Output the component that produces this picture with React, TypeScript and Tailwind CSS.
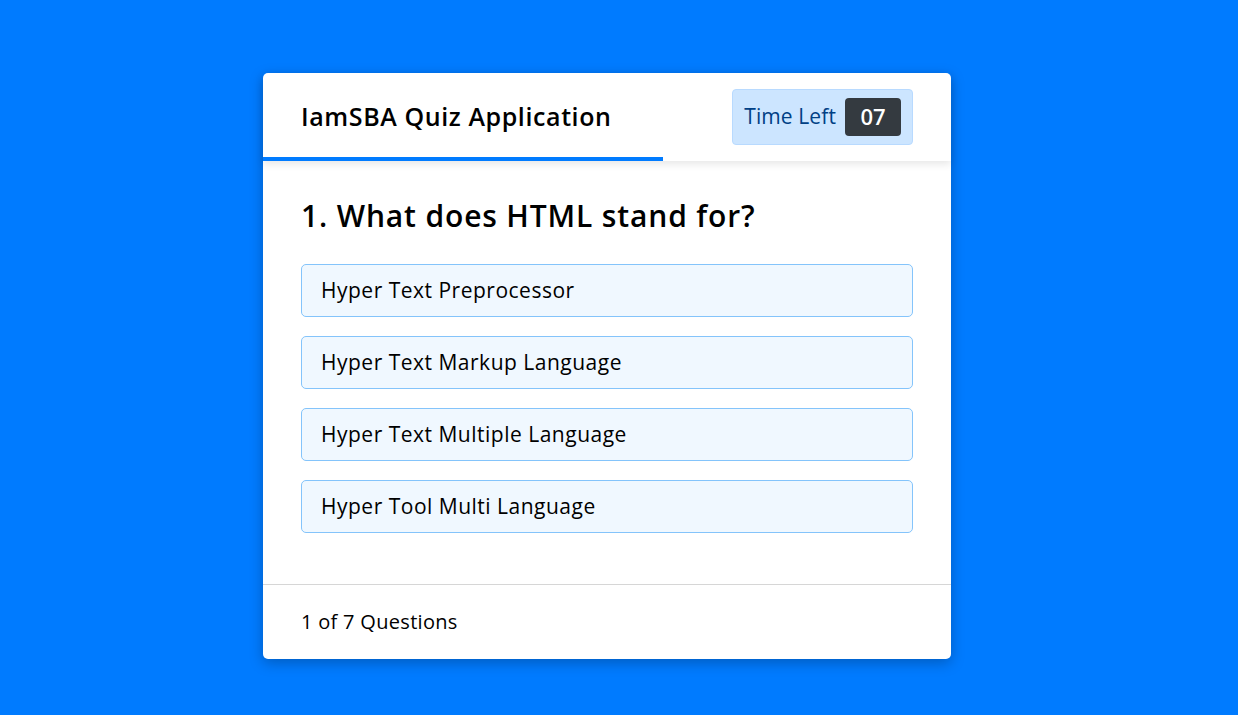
import React from "react";

const options = [
  "Hyper Text Preprocessor",
  "Hyper Text Markup Language",
  "Hyper Text Multiple Language",
  "Hyper Tool Multi Language",
];

const App: React.FC = () => {
  return (
    <div
      className="min-h-screen bg-[#007bff] flex justify-center pr-[24px] pt-[73px]"
      style={{ fontFamily: '"Open Sans", "Liberation Sans", sans-serif' }}
    >
      <div className="w-[688px] h-[586px] bg-white rounded-[5px] shadow-[0_4px_14px_rgba(0,0,0,0.25)] flex flex-col">
        {/* header */}
        <div className="relative h-[88px] shadow-[0_3px_8px_rgba(0,0,0,0.1)] flex items-center justify-between px-[38px] z-10">
          <h2 className="text-[25px] font-semibold text-black tracking-[0.6px]">IamSBA Quiz Application</h2>
          <div className="flex items-center gap-[9px] h-[56px] pl-[11px] pr-[11px] bg-[#cce5ff] border border-[#b8daff] rounded-[4px] -mt-[1px]">
            <span className="text-[21px] text-[#004085] tracking-[0.1px]">Time Left</span>
            <span className="w-[56px] h-[38px] bg-[#343a40] rounded-[4px] text-white text-[22px] font-semibold flex items-center justify-center">
              07
            </span>
          </div>
          <div className="absolute left-0 bottom-0 h-[4px] w-[400px] bg-[#007bff]" />
        </div>

        {/* body */}
        <div className="flex-1 px-[38px] pt-[35px]">
          <h2 className="text-[30px] font-semibold text-black leading-[40px] tracking-[0.85px]">1. What does HTML stand for?</h2>
          <ul className="mt-[28px] flex flex-col gap-[19px]">
            {options.map((o) => (
              <li
                key={o}
                className="h-[53px] flex items-center px-[19px] bg-[#f0f8ff] border border-[#84c4fb] rounded-[5px] text-[21px] tracking-[0.5px] text-black"
              >
                {o}
              </li>
            ))}
          </ul>
        </div>

        {/* footer */}
        <div className="h-[75px] border-t border-[#d6d6d6] flex items-center px-[38px]">
          <span className="text-[20px] text-black tracking-[0.3px]">
            <span className="font-medium">1</span> of <span className="font-medium">7</span> Questions
          </span>
        </div>
      </div>
    </div>
  );
};

export default App;
